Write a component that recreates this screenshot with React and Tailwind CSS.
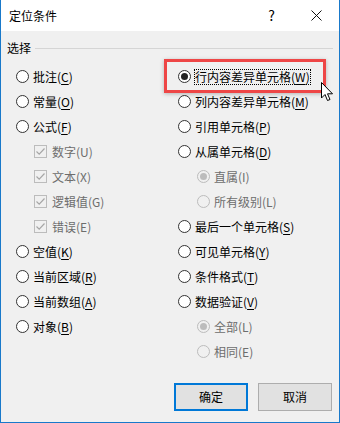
import React from "react";

const FONT = { fontFamily: '"Noto Sans CJK SC", "Noto Sans", sans-serif' };

function Label({ text, acc, underline = true, disabled = false, focus = false }) {
  return (
    <span
      className={`whitespace-nowrap leading-[14px] ${disabled ? "text-[#6d6d6d]" : "text-black"} ${
        focus ? "border border-dotted border-black px-[0px] -ml-[1px]" : ""
      }`}
    >
      {text}(
      <span className={underline && !disabled ? "underline underline-offset-[2px]" : ""}>{acc}</span>)
    </span>
  );
}

function Radio({ checked = false, disabled = false }) {
  return (
    <span
      className={`flex h-[13px] w-[13px] shrink-0 items-center justify-center rounded-full border ${
        disabled ? "border-[#bcbcbc] bg-[#f0f0f0]" : "border-[#333333] bg-white"
      }`}
    >
      {checked && (
        <span className={`h-[7px] w-[7px] rounded-full ${disabled ? "bg-[#bcbcbc]" : "bg-[#222222]"}`} />
      )}
    </span>
  );
}

function Check() {
  return (
    <span className="flex h-[13px] w-[13px] shrink-0 items-center justify-center border border-[#bcbcbc] bg-[#f0f0f0]">
      <svg width="11" height="11" viewBox="0 0 11 11">
        <path d="M1.5 5.5 L4.2 8.2 L9.5 2.5" fill="none" stroke="#a6a6a6" strokeWidth="1.2" />
      </svg>
    </span>
  );
}

function RRow({ text, acc, indent = false, checked, disabled, focus, underline }) {
  return (
    <div className={`flex h-[25px] items-center gap-[4px] ${indent ? "pl-[19px]" : ""}`}>
      <Radio checked={checked} disabled={disabled} />
      <Label text={text} acc={acc} disabled={disabled} focus={focus} underline={underline} />
    </div>
  );
}

function CRow({ text, acc }) {
  return (
    <div className="flex h-[25px] items-center gap-[5px] pl-[18px]">
      <Check />
      <Label text={text} acc={acc} disabled />
    </div>
  );
}

export default function App() {
  return (
    <div
      className="relative flex h-[423px] w-[340px] flex-col overflow-hidden border-x border-b border-[#1979ca] bg-[#f0f0f0] text-[12px]"
      style={FONT}
    >
      {/* title bar */}
      <div className="flex h-[31px] shrink-0 items-center bg-white">
        <span className="pl-[8px] text-[12px] text-black">定位条件</span>
        <span className="ml-auto mr-[36px] text-[14px] text-black">?</span>
        <svg className="mr-[17px]" width="11" height="11" viewBox="0 0 11 11">
          <path d="M0.5 0.5 L10.5 10.5 M10.5 0.5 L0.5 10.5" stroke="#111" strokeWidth="1" />
        </svg>
      </div>

      {/* group header */}
      <div className="mt-[10px] flex h-[14px] items-center pl-[6px] pr-[6px]">
        <span className="leading-[14px] text-black">选择</span>
        <span className="ml-[4px] h-px flex-1 bg-[#d5d5d5]" />
      </div>

      {/* options */}
      <div className="mt-[9px] grid grid-cols-[162px_1fr] pl-[15px]">
        <div className="flex flex-col">
          <RRow text="批注" acc="C" />
          <RRow text="常量" acc="O" />
          <RRow text="公式" acc="F" />
          <CRow text="数字" acc="U" />
          <CRow text="文本" acc="X" />
          <CRow text="逻辑值" acc="G" />
          <CRow text="错误" acc="E" />
          <RRow text="空值" acc="K" />
          <RRow text="当前区域" acc="R" />
          <RRow text="当前数组" acc="A" />
          <RRow text="对象" acc="B" />
        </div>
        <div className="flex flex-col">
          <RRow text="行内容差异单元格" acc="W" checked focus />
          <RRow text="列内容差异单元格" acc="M" />
          <RRow text="引用单元格" acc="P" />
          <RRow text="从属单元格" acc="D" />
          <RRow text="直属" acc="I" indent checked disabled />
          <RRow text="所有级别" acc="L" indent disabled />
          <RRow text="最后一个单元格" acc="S" />
          <RRow text="可见单元格" acc="Y" />
          <RRow text="条件格式" acc="T" />
          <RRow text="数据验证" acc="V" />
          <RRow text="全部" acc="L" indent checked disabled />
          <RRow text="相同" acc="E" indent disabled />
        </div>
      </div>

      <div className="flex-1" />

      {/* buttons */}
      <div className="flex justify-end gap-[10px] pb-[11px] pr-[7px]">
        <button className="flex h-[28px] w-[74px] items-center justify-center border-2 border-[#0078d7] bg-[#e1e1e1] text-black">
          确定
        </button>
        <button className="flex h-[28px] w-[74px] items-center justify-center border border-[#adadad] bg-[#e1e1e1] text-black">
          取消
        </button>
      </div>

      {/* red highlight */}
      <div className="pointer-events-none absolute left-[163px] top-[59px] h-[34px] w-[162px] border-[3px] border-[#ee4646] shadow-[0_1px_4px_rgba(0,0,0,0.25)]" />

      {/* mouse cursor */}
      <svg className="pointer-events-none absolute left-[320px] top-[82px]" width="14" height="21" viewBox="0 0 14 21">
        <path
          d="M0.5 0.5 L0.5 16 L4 12.5 L6.5 18.5 L9 17.5 L6.5 11.8 L11.5 11.8 Z"
          fill="#ffffff"
          stroke="#000000"
          strokeWidth="1"
          strokeLinejoin="round"
        />
      </svg>
    </div>
  );
}
